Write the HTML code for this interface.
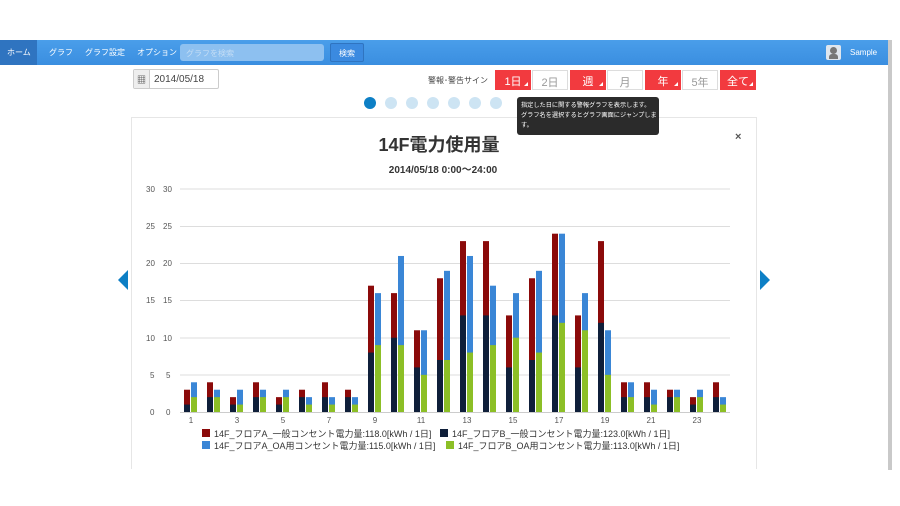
<!DOCTYPE html>
<html><head><meta charset="utf-8"><style>
*{margin:0;padding:0;box-sizing:border-box}
body{width:900px;height:506px;background:#fff;position:relative;overflow:hidden;font-family:"Liberation Sans","Noto Sans CJK JP",sans-serif}
.nav{position:absolute;left:0;top:40px;width:888px;height:25px;background:linear-gradient(#4a9eea,#3a8ee0);color:#fff;font-size:8px}
.nav span{position:absolute;top:7px}
.home{position:absolute;left:0;top:0;width:37px;height:25px;background:#2f74c0}
.search{position:absolute;left:180px;top:4px;width:144px;height:17px;background:#8dc0f0;border-radius:3px;color:#c4ddf5;font-size:8px;padding:4px 6px}
.sbtn{position:absolute;left:330px;top:3px;width:34px;height:19px;border:1px solid #2f74c0;background:#3b8ae0;border-radius:2px;font-size:8px;text-align:center;padding-top:4px}
.scroll{position:absolute;left:888px;top:40px;width:4px;height:430px;background:#c9c9c9}
.date{position:absolute;left:133px;top:69px;width:86px;height:20px;border:1px solid #ccc;border-radius:2px;font-size:10px;color:#444}
.date .ic{position:absolute;left:0;top:0;width:16px;height:18px;background:#eee;border-right:1px solid #ccc;text-align:center;font-size:9px;padding-top:3px}
.date .t{position:absolute;left:20px;top:4px}
.btn{position:absolute;top:70px;width:36px;height:20px;font-size:11px;text-align:center;padding-top:3px}
.r{background:#f23a3f;color:#fff}
.w{background:#fff;color:#999;border:1px solid #ddd}
.r:after{content:"";position:absolute;right:3px;bottom:4px;border-left:4px solid transparent;border-bottom:4px solid #fff}
.dot{position:absolute;top:97px;width:12px;height:12px;border-radius:50%;background:#cde4f3}
.tip{position:absolute;left:517px;top:97px;width:142px;height:38px;background:#2b2b2b;border-radius:3px;color:#fff;font-size:6.2px;line-height:10px;padding:4px 4px;white-space:nowrap;overflow:hidden}
.tip:before{content:"";position:absolute;left:47px;top:-4px;border-left:4px solid transparent;border-right:4px solid transparent;border-bottom:4px solid #2b2b2b}
.card{position:absolute;left:131px;top:117px;width:626px;height:352px;border:1px solid #e6e6e6;border-bottom:none}
</style></head><body>
<div class="nav"><div class="home"></div>
<span style="left:7px">ホーム</span><span style="left:49px">グラフ</span><span style="left:85px">グラフ設定</span><span style="left:137px">オプション</span>
<div class="search">グラフを検索</div><div class="sbtn">検索</div>
<div style="position:absolute;left:826px;top:5px;width:15px;height:15px;background:#dfe6ee;border-radius:2px"><div style="position:absolute;left:4px;top:2px;width:7px;height:7px;border-radius:50%;background:#777"></div><div style="position:absolute;left:3px;top:9px;width:9px;height:5px;background:#777;border-radius:3px 3px 0 0"></div></div>
<span style="left:850px;top:8px">Sample</span></div>
<div class="scroll"></div>
<div class="date"><div class="ic">▦</div><div class="t">2014/05/18</div></div>
<div style="position:absolute;left:428px;top:75px;font-size:8px;color:#444">警報･警告サイン</div>
<div class="btn r" style="left:495px">1日</div><div class="btn w" style="left:532px">2日</div><div class="btn r" style="left:570px">週</div><div class="btn w" style="left:607px">月</div><div class="btn r" style="left:645px">年</div><div class="btn w" style="left:682px">5年</div><div class="btn r" style="left:720px">全て</div>
<div class="dot" style="left:364px;background:#0d7fc5"></div><div class="dot" style="left:385px"></div><div class="dot" style="left:406px"></div><div class="dot" style="left:427px"></div><div class="dot" style="left:448px"></div><div class="dot" style="left:469px"></div><div class="dot" style="left:490px"></div>
<div class="card"></div>
<div class="tip">指定した日に関する警報グラフを表示します。<br>グラフ名を選択するとグラフ画面にジャンプしま<br>す。</div>
<svg style="position:absolute;left:0;top:0" width="900" height="506" font-family="Liberation Sans, Noto Sans CJK JP, sans-serif">
<text x="735" y="140" font-size="11" fill="#555" font-weight="bold">×</text>
<text x="439" y="151" font-size="18" font-weight="bold" fill="#333" text-anchor="middle">14F電力使用量</text>
<text x="443" y="173" font-size="10" fill="#333" font-weight="bold" text-anchor="middle">2014/05/18 0:00～24:00</text>
<polygon points="118,280 128,270 128,290" fill="#0d7fc5"/><polygon points="770,280 760,270 760,290" fill="#0d7fc5"/>
<g stroke="#ddd" stroke-width="1">
<line x1="180" x2="730" y1="412.5" y2="412.5" stroke="#ccc"/><line x1="180" x2="730" y1="375" y2="375"/><line x1="180" x2="730" y1="338" y2="338"/><line x1="180" x2="730" y1="300.5" y2="300.5"/><line x1="180" x2="730" y1="263.5" y2="263.5"/><line x1="180" x2="730" y1="226.5" y2="226.5"/><line x1="180" x2="730" y1="189" y2="189"/></g>
<g font-size="8" fill="#555">
<text x="150" y="415">0</text><text x="166" y="415">0</text><text x="150" y="378">5</text><text x="166" y="378">5</text>
<text x="146" y="341">10</text><text x="163" y="341">10</text><text x="146" y="303">15</text><text x="163" y="303">15</text>
<text x="146" y="266">20</text><text x="163" y="266">20</text><text x="146" y="229">25</text><text x="163" y="229">25</text>
<text x="146" y="192">30</text><text x="163" y="192">30</text></g>
<g font-size="8" fill="#555" text-anchor="middle">
<text x="191" y="423">1</text><text x="237" y="423">3</text><text x="283" y="423">5</text><text x="329" y="423">7</text><text x="375" y="423">9</text><text x="421" y="423">11</text><text x="467" y="423">13</text><text x="513" y="423">15</text><text x="559" y="423">17</text><text x="605" y="423">19</text><text x="651" y="423">21</text><text x="697" y="423">23</text></g>
<g transform="translate(0,412) scale(1,-7.43)">
<g fill="#8b0a0a">
<rect x="184" width="6" height="3"/><rect x="207" width="6" height="4"/><rect x="230" width="6" height="2"/><rect x="253" width="6" height="4"/><rect x="276" width="6" height="2"/><rect x="299" width="6" height="3"/><rect x="322" width="6" height="4"/><rect x="345" width="6" height="3"/><rect x="368" width="6" height="17"/><rect x="391" width="6" height="16"/><rect x="414" width="6" height="11"/><rect x="437" width="6" height="18"/><rect x="460" width="6" height="23"/><rect x="483" width="6" height="23"/><rect x="506" width="6" height="13"/><rect x="529" width="6" height="18"/><rect x="552" width="6" height="24"/><rect x="575" width="6" height="13"/><rect x="598" width="6" height="23"/><rect x="621" width="6" height="4"/><rect x="644" width="6" height="4"/><rect x="667" width="6" height="3"/><rect x="690" width="6" height="2"/><rect x="713" width="6" height="4"/></g>
<g fill="#0f1f3a">
<rect x="184" width="6" height="1"/><rect x="207" width="6" height="2"/><rect x="230" width="6" height="1"/><rect x="253" width="6" height="2"/><rect x="276" width="6" height="1"/><rect x="299" width="6" height="2"/><rect x="322" width="6" height="2"/><rect x="345" width="6" height="2"/><rect x="368" width="6" height="8"/><rect x="391" width="6" height="10"/><rect x="414" width="6" height="6"/><rect x="437" width="6" height="7"/><rect x="460" width="6" height="13"/><rect x="483" width="6" height="13"/><rect x="506" width="6" height="6"/><rect x="529" width="6" height="7"/><rect x="552" width="6" height="13"/><rect x="575" width="6" height="6"/><rect x="598" width="6" height="12"/><rect x="621" width="6" height="2"/><rect x="644" width="6" height="2"/><rect x="667" width="6" height="2"/><rect x="690" width="6" height="1"/><rect x="713" width="6" height="2"/></g>
<g fill="#3a86d6">
<rect x="191" width="6" height="4"/><rect x="214" width="6" height="3"/><rect x="237" width="6" height="3"/><rect x="260" width="6" height="3"/><rect x="283" width="6" height="3"/><rect x="306" width="6" height="2"/><rect x="329" width="6" height="2"/><rect x="352" width="6" height="2"/><rect x="375" width="6" height="16"/><rect x="398" width="6" height="21"/><rect x="421" width="6" height="11"/><rect x="444" width="6" height="19"/><rect x="467" width="6" height="21"/><rect x="490" width="6" height="17"/><rect x="513" width="6" height="16"/><rect x="536" width="6" height="19"/><rect x="559" width="6" height="24"/><rect x="582" width="6" height="16"/><rect x="605" width="6" height="11"/><rect x="628" width="6" height="4"/><rect x="651" width="6" height="3"/><rect x="674" width="6" height="3"/><rect x="697" width="6" height="3"/><rect x="720" width="6" height="2"/></g>
<g fill="#8cbf26">
<rect x="191" width="6" height="2"/><rect x="214" width="6" height="2"/><rect x="237" width="6" height="1"/><rect x="260" width="6" height="2"/><rect x="283" width="6" height="2"/><rect x="306" width="6" height="1"/><rect x="329" width="6" height="1"/><rect x="352" width="6" height="1"/><rect x="375" width="6" height="9"/><rect x="398" width="6" height="9"/><rect x="421" width="6" height="5"/><rect x="444" width="6" height="7"/><rect x="467" width="6" height="8"/><rect x="490" width="6" height="9"/><rect x="513" width="6" height="10"/><rect x="536" width="6" height="8"/><rect x="559" width="6" height="12"/><rect x="582" width="6" height="11"/><rect x="605" width="6" height="5"/><rect x="628" width="6" height="2"/><rect x="651" width="6" height="1"/><rect x="674" width="6" height="2"/><rect x="697" width="6" height="2"/><rect x="720" width="6" height="1"/></g>
</g>
<g font-size="9" fill="#333">
<rect x="202" y="429" width="8" height="8" fill="#8b0a0a"/><text x="214" y="437">14F_フロアA_一般コンセント電力量:118.0[kWh / 1日]</text>
<rect x="440" y="429" width="8" height="8" fill="#0f1f3a"/><text x="452" y="437">14F_フロアB_一般コンセント電力量:123.0[kWh / 1日]</text>
<rect x="202" y="441" width="8" height="8" fill="#3a86d6"/><text x="214" y="449">14F_フロアA_OA用コンセント電力量:115.0[kWh / 1日]</text>
<rect x="446" y="441" width="8" height="8" fill="#8cbf26"/><text x="458" y="449">14F_フロアB_OA用コンセント電力量:113.0[kWh / 1日]</text>
</g>
</svg>
</body></html>
